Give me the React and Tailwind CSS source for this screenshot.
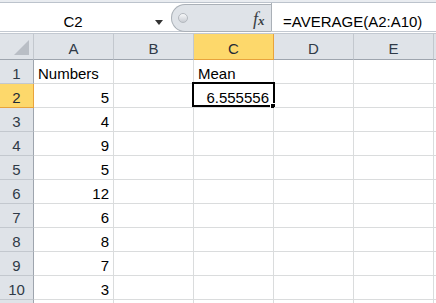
const rows = [
  ['Numbers', '', 'Mean'],
  ['5', '', '6.555556'],
  ['4'],
  ['9'],
  ['5'],
  ['12'],
  ['6'],
  ['8'],
  ['7'],
  ['3'],
  [],
];

const cols = ['A', 'B', 'C', 'D', 'E'];

function ColHeader({ label }) {
  const active = label === 'C';
  return (
    <div
      className={
        'w-[80px] shrink-0 h-[26px] border-r border-b text-center pt-[6px] leading-[17px] ' +
        (active
          ? 'bg-[#fdd86b] border-b-[#e8a33c] border-r-[#e8a33c] text-[#1f2a36]'
          : 'bg-[#dfe3e8] border-r-[#c3c8ce] border-b-[#9ea5ae] text-[#2f3a47]')
      }
    >
      {label}
    </div>
  );
}

function Cell({ value, col, row }) {
  const numeric = value && !isNaN(Number(value));
  const selected = col === 2 && row === 1;
  return (
    <div
      className={
        'relative w-[80px] shrink-0 h-[24px] border-r border-b border-[#dadcdd] pt-[5px] leading-[17px] text-black ' +
        (numeric ? 'text-right pr-[4px]' : 'text-left pl-[4px]')
      }
    >
      {value}
      {selected && (
        <>
          <div className="absolute left-[-2px] top-[-2px] w-[83px] h-[25px] border-2 border-black" />
          <div className="absolute left-[76px] top-[19px] w-[6px] h-[6px] bg-black border border-white" />
        </>
      )}
    </div>
  );
}

function FormulaBar() {
  return (
    <div className="flex h-[28px] bg-white">
      <div className="relative w-[171px] shrink-0">
        <div className="w-[146px] text-center pt-[10px] leading-[17px] text-black">C2</div>
        <div className="absolute left-[155px] top-[17px] w-0 h-0 border-l-[4px] border-r-[4px] border-t-[5px] border-l-transparent border-r-transparent border-t-[#333]" />
      </div>
      <div className="relative w-[100px] shrink-0 mt-[1px] mb-[-1px] bg-[#dfe3e8] border border-r-0 border-[#aab0b7] rounded-l-[14px]">
        <div className="absolute left-[6px] top-[8px] w-[10px] h-[10px] rounded-full bg-gradient-to-b from-[#f7f8fa] to-[#c9cdd3] border border-[#b4b9bf]" />
        <div className="absolute left-[81px] top-[4px] font-['Liberation_Serif',serif] italic text-[#3a3f45] text-[18px] leading-[20px]">
          f<span className="text-[13px] font-bold">x</span>
        </div>
      </div>
      <div className="flex-1 border-l border-[#aab0b7] pl-[11px] pt-[10px] leading-[17px] text-black whitespace-nowrap">
        =AVERAGE(A2:A10)
      </div>
    </div>
  );
}

export default function App() {
  return (
    <div className="w-[436px] h-[303px] overflow-hidden bg-white font-['Liberation_Sans',Arial,sans-serif] text-[15px]">
      <div className="h-[3px] bg-[#e9ecf0] border-b border-[#bcc3cc]" />
      <FormulaBar />
      <div className="h-[3px] bg-white border-y border-[#c3c9d1]" />
      <div className="flex">
        <div className="relative w-[34px] shrink-0 h-[26px] bg-[#dfe3e8] border-r border-b border-r-[#c3c8ce] border-b-[#9ea5ae]">
          <svg className="absolute left-[14px] top-[6px]" width="15" height="15" viewBox="0 0 15 15">
            <polygon points="15,0 15,15 0,15" fill="#b9bec5" />
          </svg>
        </div>
        {cols.map((c) => (
          <ColHeader key={c} label={c} />
        ))}
        <div className="flex-1 h-[26px] bg-[#dfe3e8] border-b border-[#9ea5ae]" />
      </div>
      {rows.map((r, i) => {
        const active = i === 1;
        return (
          <div key={i} className="flex">
            <div
              className={
                'w-[34px] shrink-0 h-[24px] border-r border-b text-center pt-[5px] leading-[17px] ' +
                (active
                  ? 'bg-[#fdd86b] border-[#e8a33c] text-[#1f2a36]'
                  : 'bg-[#dfe3e8] border-r-[#9ea5ae] border-b-[#c3c8ce] text-[#2f3a47]')
              }
            >
              {i < 10 ? i + 1 : ''}
            </div>
            {cols.map((c, j) => (
              <Cell key={c} value={r[j]} col={j} row={i} />
            ))}
            <div className="flex-1 h-[24px] border-b border-[#dadcdd]" />
          </div>
        );
      })}
    </div>
  );
}
